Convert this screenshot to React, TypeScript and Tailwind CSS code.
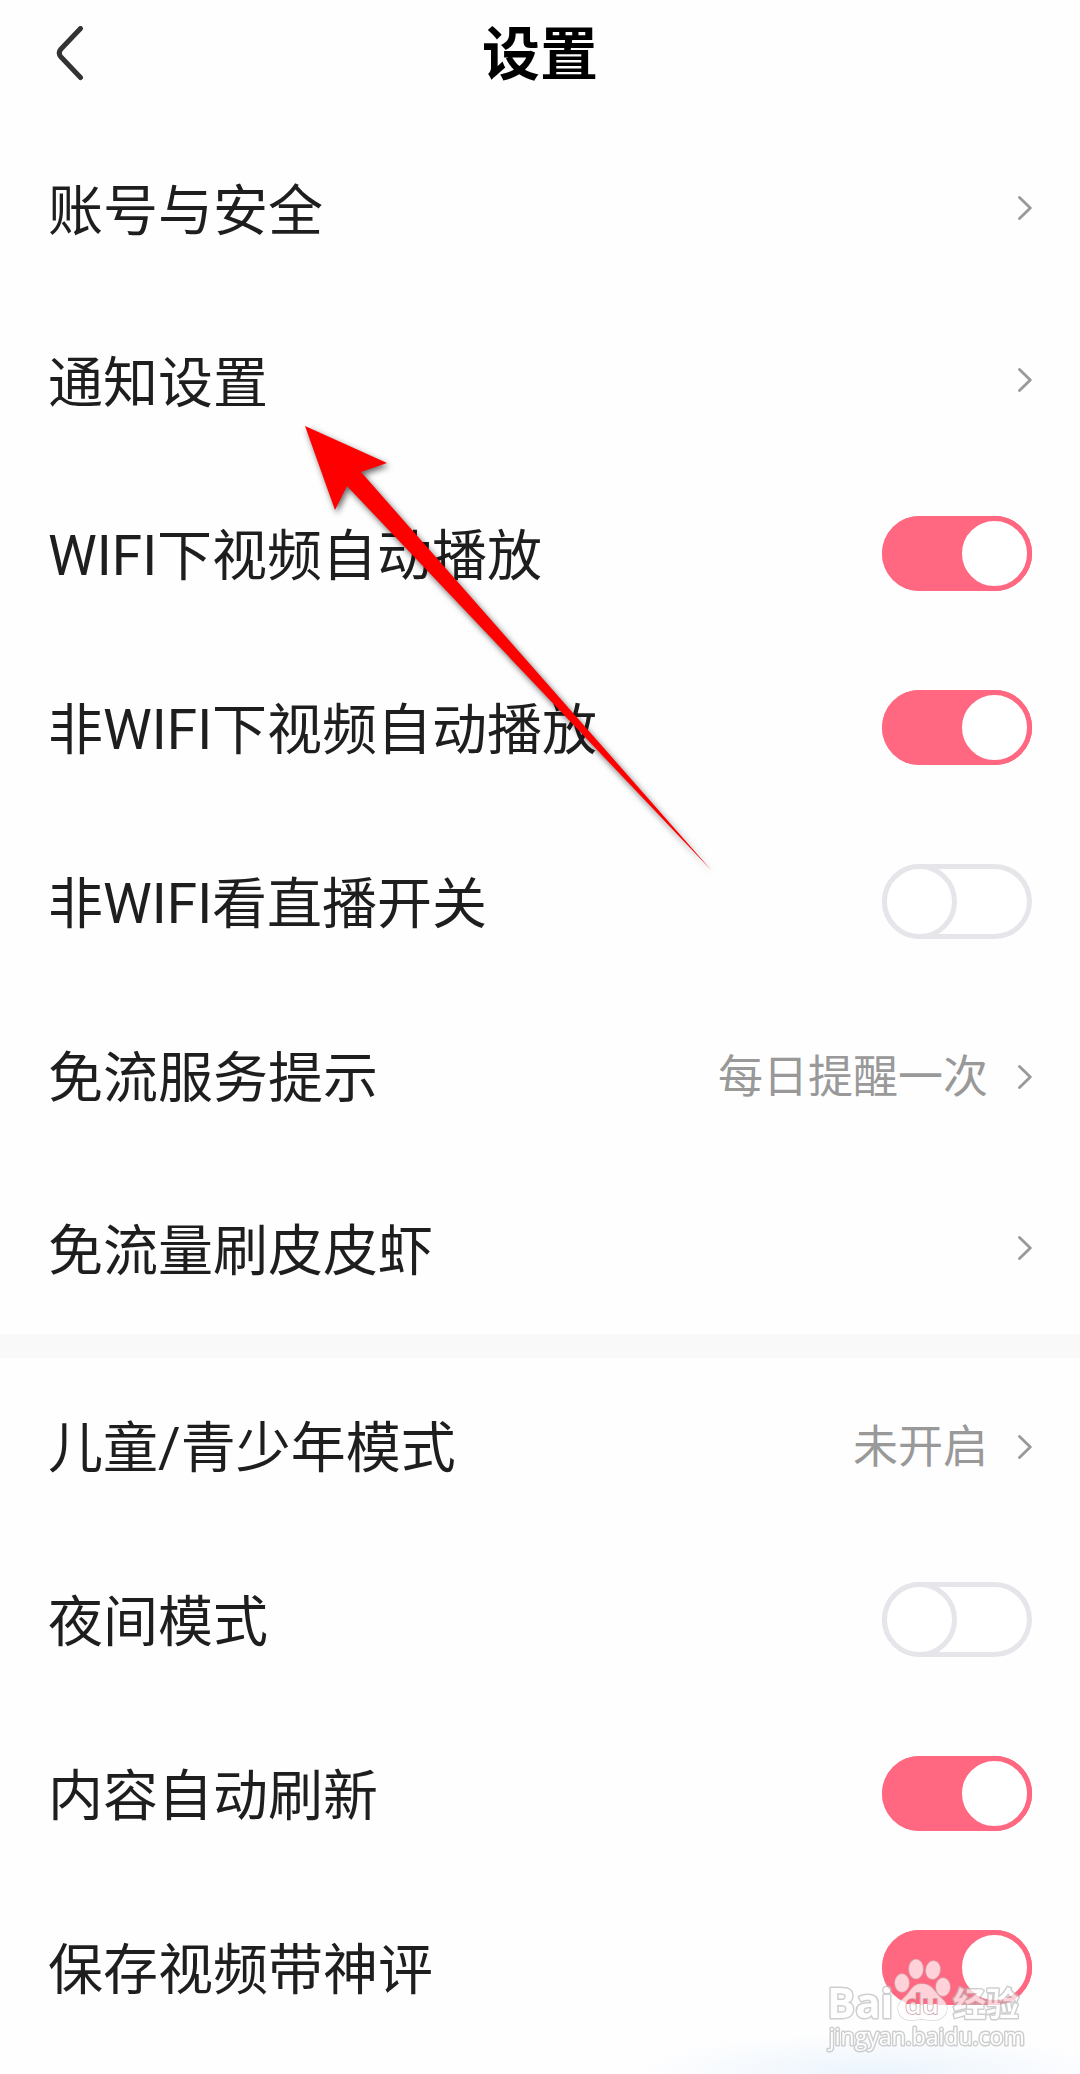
import { useState } from 'react'

type Item = {
    id: string
    label: string
    value?: string
    on?: boolean
}

const groups: Item[][] = [
    [
        { id: 'account', label: '账号与安全' },
        { id: 'notify', label: '通知设置' },
        { id: 'wifi-autoplay', label: 'WIFI下视频自动播放', on: true },
        { id: 'cell-autoplay', label: '非WIFI下视频自动播放', on: true },
        { id: 'cell-live', label: '非WIFI看直播开关', on: false },
        { id: 'free-tip', label: '免流服务提示', value: '每日提醒一次' },
        { id: 'free-data', label: '免流量刷皮皮虾' },
    ],
    [
        { id: 'teen', label: '儿童/青少年模式', value: '未开启' },
        { id: 'night', label: '夜间模式', on: false },
        { id: 'refresh', label: '内容自动刷新', on: true },
        { id: 'save-comment', label: '保存视频带神评', on: true },
    ],
]

function Chevron() {
    return (
        <svg className="w-[14px] h-[24px] shrink-0" viewBox="0 0 14 24" fill="none" stroke="#999" strokeWidth="2.8" strokeLinecap="round" strokeLinejoin="round" aria-hidden="true">
            <path d="M1.5 1.5 12.3 12 1.5 22.5" />
        </svg>
    )
}

function SwitchRow({ item }: { item: Item }) {
    const [on, setOn] = useState(!!item.on)

    return (
        <div className="h-[174px] flex items-center justify-between">
            <label htmlFor={item.id} className="pt-[6px]">{item.label}</label>
            <input
                id={item.id}
                type="checkbox"
                checked={on}
                onChange={(e) => setOn(e.target.checked)}
                className="appearance-none block shrink-0 w-[150px] h-[75px] rounded-full bg-white inset-ring-[5px] inset-ring-[#e5e5ea] checked:bg-[#ff6880] checked:inset-ring-[#ff6880] before:block before:size-[75px] before:rounded-full before:bg-white before:border-[5px] before:border-[#e5e5ea] checked:before:border-[#ff6880] checked:before:ml-[75px]"
            />
        </div>
    )
}

function LinkRow({ item }: { item: Item }) {
    return (
        <a href={`#${item.id}`} className={`flex items-center justify-between ${item.value ? 'h-[174px]' : 'h-[172px]'}`}>
            <span className="pt-[6px]">{item.label}</span>
            {item.value ? (
                <span className="flex items-center gap-[30px] pt-[4px]">
                    <span className="text-[45px] text-[#999]">{item.value}</span>
                    <Chevron />
                </span>
            ) : (
                <Chevron />
            )}
        </a>
    )
}

function Arrow() {
    return (
        <svg className="absolute left-[305px] top-[425px] w-[408px] h-[447px] overflow-visible pointer-events-none drop-shadow-[2px_3px_3px_rgba(0,0,0,0.6)]" viewBox="0 0 408 447" aria-hidden="true">
            <path d="M0 1 82 38 56 47 407 446 42 61 30 85Z" fill="#f00" />
        </svg>
    )
}

function Watermark() {
    return (
        <div className="absolute right-[56px] bottom-[16px] w-[196px] pointer-events-none">
            <svg className="block w-full h-[104px] overflow-visible" viewBox="0 0 196 104" aria-hidden="true">
                <defs>
                    <linearGradient id="du-fill" gradientUnits="userSpaceOnUse" x1="0" y1="0" x2="0" y2="104">
                        <stop offset="0.48" stopColor="#ff6880" />
                        <stop offset="0.48" stopColor="#fff" />
                    </linearGradient>
                </defs>
                <g opacity="0.7">
                    <g fill="#fff" stroke="#c4c4c4" strokeWidth="1.5" paintOrder="stroke">
                        <ellipse cx="74" cy="29" rx="7" ry="9" />
                        <ellipse cx="88" cy="15" rx="7" ry="9.5" />
                        <ellipse cx="105" cy="16" rx="7" ry="9" transform="rotate(10 105 16)" />
                        <ellipse cx="115" cy="33" rx="7" ry="9" />
                        <path d="M94 30c-10 0-11 8-18 14-6 5-7 10-5 15 3 8 12 8 23 6 11 2 20 2 24-6 2-5 1-10-5-15-7-6-9-14-19-14Z" />
                    </g>
                    <g fill="#fff" stroke="#bbb" strokeWidth="3" paintOrder="stroke" strokeLinejoin="round">
                        <text x="-1" y="64" fontSize="42" fontWeight="700" fontFamily="'Open Sans', sans-serif">Bai</text>
                        <text x="125" y="62" fontSize="33" fontWeight="700" fontFamily="'Noto Sans CJK SC', sans-serif">经验</text>
                        <text x="1" y="91" fontSize="23" fontWeight="400" fontFamily="'Open Sans', sans-serif">jingyan.baidu.com</text>
                    </g>
                </g>
                <text x="77" y="60" fontSize="27" fontWeight="600" fontFamily="'Open Sans', sans-serif" fill="url(#du-fill)" stroke="#c4a0a6" strokeWidth="1.5" paintOrder="stroke">du</text>
            </svg>
        </div>
    )
}

export default function App() {
    return (
        <div className="relative overflow-hidden bg-[#fefefe] text-[#1e1e1e] text-[55px] leading-none font-[Roboto,'Noto_Sans_CJK_SC',sans-serif]">
            <header className="h-[122px] px-[48px] pb-[14px] grid grid-cols-[1fr_auto_1fr] items-center">
                <button type="button" aria-label="返回" className="w-[44px] h-[64px] flex items-center pl-[6px]">
                    <svg className="w-[30px] h-[56px]" viewBox="0 0 30 56" fill="none" stroke="#333" strokeWidth="5" strokeLinecap="round" strokeLinejoin="round" aria-hidden="true">
                        <path d="M26.5 2.5 7 23Q3.5 27 7 31L26.5 51.5" />
                    </svg>
                </button>
                <h1 className="text-[58px] font-bold text-black pt-[2px]">设置</h1>
            </header>
            <main>
                {groups.map((items, i) => (
                    <section key={i} className={i > 0 ? 'border-t-[24px] border-[#f9f9f9] px-[48px]' : 'px-[48px]'}>
                        {items.map((item) =>
                            item.on === undefined ? <LinkRow key={item.id} item={item} /> : <SwitchRow key={item.id} item={item} />
                        )}
                    </section>
                ))}
            </main>
            <div className="h-[20px]" />
            <div className="absolute inset-x-0 bottom-0 h-[42px] pointer-events-none bg-[radial-gradient(ellipse_22%_100%_at_81%_100%,#ebf4fd,transparent)]" />
            <Arrow />
            <Watermark />
        </div>
    )
}
